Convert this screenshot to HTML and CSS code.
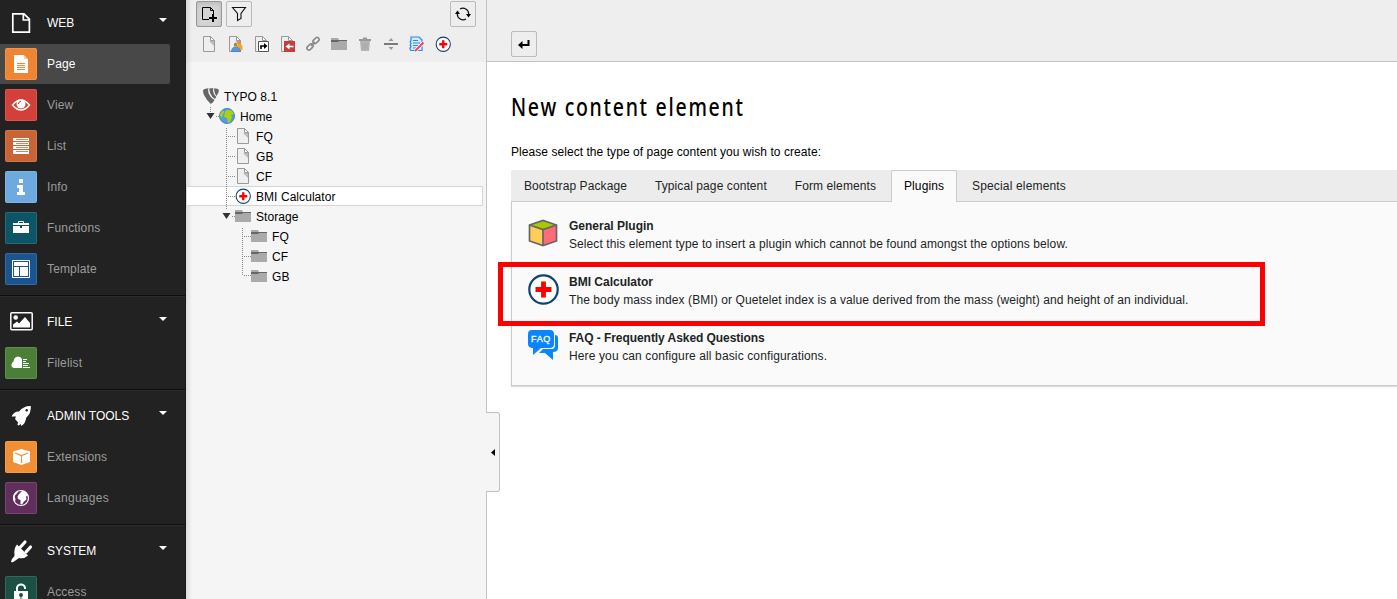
FILE: index.html
```html
<!DOCTYPE html>
<html lang="en">
<head>
<meta charset="utf-8">
<title>New content element</title>
<link rel="stylesheet" href="styles.css">
</head>
<body>
<svg width="0" height="0" class="defs">
  <defs>
    <symbol id="page" viewBox="0 0 16 16"><path d="M2.500.5h7l4 4v11h-11z" fill="#efefef" stroke="#999"/><path d="M9.500.5v4h4z" fill="#fff" stroke="#999"/><path d="M8 5h5v5z" fill="#bbb"/></symbol>
    <symbol id="folder" viewBox="0 0 16 16"><path d="M0 2h7l1 2h8v10H0z" fill="#aaa"/><path d="M0 4h16v1H8L7 6H0z" fill="#666"/></symbol>
    <symbol id="bmi" viewBox="0 0 32 32"><circle cx="16.500" cy="16.500" r="14.200" fill="#fff" stroke="#0b4472" stroke-width="2.200"/><path d="M16.500 8.500v16M8.500 16.500h16" stroke="#f00" stroke-width="4.800"/></symbol>
    <symbol id="caret" viewBox="0 0 8 4"><path d="M0 0h8L4 4z" fill="#fff"/></symbol>
  </defs>
</svg>
<div class="app">
  <nav class="modules">
    <section class="group">
      <div class="group-head"><svg class="head-icon" viewBox="0 0 24 24"><path d="M3.800 2.800H15l5.400 5.400v13H3.800zM14.300 3v6h6" fill="none" stroke="#fff" stroke-width="1.700"/></svg><span>WEB</span><svg class="caret"><use href="#caret"/></svg></div>
      <div class="module active"><svg class="tile orange" viewBox="0 0 32 32"><path d="M9 7h10v4h4v14H9z" fill="#fff"/><path d="M19 7l4 4h-4z" fill="#f9c9a0"/><path d="M12 15.500h8M12 17.500h8M12 19.500h8M12 21.500h8" stroke="#ef8532"/></svg><span>Page</span></div>
      <div class="module"><svg class="tile red" viewBox="0 0 32 32"><path d="M7.500 16Q16 5.800 24.500 16Q16 26.200 7.500 16z" fill="none" stroke="#fff" stroke-width="1.500"/><circle cx="16" cy="15" r="4.500" fill="#fff"/><path d="M13.300 15a3 3 0 0 1 2.700-2.700" fill="none" stroke="#d24039"/></svg><span>View</span></div>
      <div class="module"><svg class="tile rust" viewBox="0 0 32 32"><path d="M8 8h16v16H8z" fill="#fff"/><path d="M8 11.500h16M8 15.500h16M8 19.500h16" stroke="#ca6435"/><path d="M11 9.500h12M11 13.500h12M11 17.500h12M11 21.500h12" stroke="#ca6435" stroke-width=".8"/></svg><span>List</span></div>
      <div class="module"><svg class="tile blue" viewBox="0 0 32 32"><path d="M14 8h4v4h-4zM12 14h6v7h2v3h-8v-3h2v-4h-2z" fill="#fff"/></svg><span>Info</span></div>
      <div class="module"><svg class="tile teal" viewBox="0 0 32 32"><path d="M13.500 11V9.500h5V11" fill="none" stroke="#fff"/><path d="M8 11h16v10H8z" fill="#fff"/><path d="M8 13.500h16" stroke="#0b5566"/><path d="M15 13h2v3h-2z" fill="#0b5566"/></svg><span>Functions</span></div>
      <div class="module"><svg class="tile navy" viewBox="0 0 32 32"><path d="M7.500 7.500h17v17h-17z" fill="none" stroke="#fff"/><path d="M9 9h14v4H9zM9 14h5v9H9zM15 14h8v9h-8z" fill="#fff"/></svg><span>Template</span></div>
    </section>
    <section class="group">
      <div class="group-head"><svg class="head-icon" viewBox="0 0 24 24"><rect x="1.800" y="2.800" width="21.400" height="17" rx="1" fill="none" stroke="#fff" stroke-width="1.500"/><circle cx="6.700" cy="7.500" r="2.300" fill="#fff"/><path d="M4 17.500v-3l4-3 2 2 6-6.500 5 6v4.500z" fill="#fff"/></svg><span>FILE</span><svg class="caret"><use href="#caret"/></svg></div>
      <div class="module"><svg class="tile green" viewBox="0 0 32 32"><path d="M17 21H9q-3-1-2.500-3.500Q7 15 8.500 14.500 9 10 13 9.500q3 0 4 2.500z" fill="#fff"/><path d="M18 12.500h4M18 14.500h3M18 16.500h6M18 18.500h5M18 20.500h7" stroke="#fff"/></svg><span>Filelist</span></div>
    </section>
    <section class="group">
      <div class="group-head"><svg class="head-icon" viewBox="0 0 24 24"><path d="M21.800 2Q15 1.500 10 7.500 5.500 7 2.500 12.500L7 12.500 6 15l3.500 3.500L12 17.500V22q5-3 5-8Q22.500 9 21.800 2z" fill="#fff"/><path d="M7 16L9 18 8.500 21 9.500 21.500 12 20V17z" fill="#fff"/><circle cx="17.700" cy="6.200" r="1.200" fill="#222"/></svg><span>ADMIN TOOLS</span><svg class="caret"><use href="#caret"/></svg></div>
      <div class="module"><svg class="tile amber" viewBox="0 0 32 32"><path d="M16.500 8l8.500 2.500v10.500l-8.500 3-8.500-3V10.500z" fill="#fff"/><path d="M10 12l6.500 2.500 6.500-2.500M16.500 14.500V22" fill="none" stroke="#f18f34" stroke-width="1.200"/></svg><span>Extensions</span></div>
      <div class="module languages"><svg class="tile purple" viewBox="0 0 32 32"><circle cx="16" cy="16" r="7.500" fill="none" stroke="#fff" stroke-width="1.200"/><path d="M9 12l3-3 1 1-1.500 2-2 2 1 3-.5 3-2-4zM14 12l3-3h3l3 4.500-2 1 .5 3-2.500 2-2 3-1.500-.5V18l-2.500-1-.5-2.500z" fill="#fff"/></svg><span>Languages</span></div>
    </section>
    <section class="group">
      <div class="group-head"><svg class="head-icon" viewBox="0 0 24 24"><path d="M8 5.500l11 11q-3.500 3.500-9 2.500L5 22.500 3 23.500 2 22.500l1-2.500 2.500-3Q4.500 9.500 8 5.500z" fill="#fff"/><path d="M11.500 8L16 3M17 13L21.500 8" stroke="#fff" stroke-width="3.200" stroke-linecap="round"/></svg><span>SYSTEM</span><svg class="caret"><use href="#caret"/></svg></div>
      <div class="module"><svg class="tile pine" viewBox="0 0 32 32"><path d="M12 16v-4a4 3.500 0 0 1 8 0v1" fill="none" stroke="#fff" stroke-width="2"/><path d="M9 15h14v10H9z" fill="#fff"/><circle cx="16" cy="19" r="2" fill="#1b5045"/><path d="M15.500 19h1v4h-1z" fill="#1b5045"/></svg><span>Access</span></div>
    </section>
  </nav>

  <aside class="tree-panel">
    <div class="tree-toolbar">
      <div class="button-row">
        <button class="btn pressed"><svg viewBox="0 0 16 16"><path d="M8 13.500H1.500v-12h8l3 3V8M9.500 1.500v3h3" fill="none" stroke="#000"/><path d="M12 8v8M8 12h8" stroke="#000" stroke-width="2"/></svg></button>
        <button class="btn"><svg viewBox="0 0 16 16"><path d="M1.500 1.500h13L10 7.500v5l-3.500 2v-7z" fill="none" stroke="#111" stroke-width="1.100"/></svg></button>
        <button class="btn refresh"><svg viewBox="0 0 16 16"><path d="M5 3a5.800 5.800 0 0 1 8.700 5M11 13a5.800 5.800 0 0 1-8.700-5" fill="none" stroke="#111" stroke-width="1.200"/><path d="M11 8h5l-2.500 3.500zM0 8h5L2.500 4.500z" fill="#000"/></svg></button>
      </div>
      <div class="icon-row">
        <svg viewBox="0 0 16 16"><use href="#page"/></svg>
        <svg viewBox="0 0 16 16"><use href="#page"/><circle cx="12" cy="7" r="2" fill="#d79a2f"/><path d="M10 14V9.500q2.500-2.500 5.500 0V14z" fill="#efa82e"/><path d="M7 7.500q1.500-1.500 3 0v3H7z" fill="#b98332"/><path d="M4.500 15.500q0-4.500 4-4.500t5 4.500z" fill="#5599ee" stroke="#3972b5" stroke-width=".6"/></svg>
        <svg viewBox="0 0 16 16"><use href="#page"/><path d="M5.500 5.500h10v10h-10z" fill="#fff" stroke="#555"/><path d="M8 13v-3h4" fill="none" stroke="#000" stroke-width="1.600"/><path d="M11 7l3.500 3L11 13z"/></svg>
        <svg viewBox="0 0 16 16"><use href="#page"/><path d="M5 5h11v11H5z" fill="#c83c3c"/><path d="M14.500 10.500H9" stroke="#fff" stroke-width="1.600"/><path d="M10.500 7.500v6l-4-3z" fill="#fff"/></svg>
        <svg viewBox="0 0 16 16"><g fill="none" stroke="#888" stroke-width="1.600"><rect x="7.500" y="2.500" width="7" height="4" rx="2" transform="rotate(-45 11 4.500)"/><rect x="1.500" y="9" width="7" height="4" rx="2" transform="rotate(-45 5 11)"/><path d="M6 10l4-4"/></g></svg>
        <svg viewBox="0 0 16 16"><use href="#folder"/></svg>
        <svg viewBox="0 0 16 16"><path d="M3 5h10l-1 10H4z" fill="#b4b4b4"/><path d="M2 3h12v2H2zM6 1.500h4V3H6z" fill="#999"/><path d="M6 7v6M8 7v6M10 7v6" stroke="#a5a5a5" stroke-width=".7"/></svg>
        <svg viewBox="0 0 16 16"><path d="M1 8h14" stroke="#666" stroke-width="1.700"/><path d="M8 2l2.500 3h-5zM8 14l2.500-3h-5z" fill="#999"/></svg>
        <svg viewBox="0 0 16 16"><path d="M2 1h8l3 3v10.500H2q-2-2 0-4-1.500-1.500 0-3-1.500-1.500 0-3z" fill="#d8eaff" stroke="#218bfa" stroke-width="1.200"/><path d="M4 4.500h5M4 7h7M4 9.500h5M4 12h3" stroke="#218bfa"/><path d="M14.500 6.500L6 15" stroke="#fff" stroke-width="3.500"/><path d="M14.500 6.500L6 15" stroke="#f64751" stroke-width="2.200"/></svg>
        <svg viewBox="0 0 16 16"><use href="#bmi"/></svg>
      </div>
    </div>
    <div class="tree">
      <div class="node"><svg class="icon" viewBox="0 0 16 16"><path d="M0 2Q2 .5 5.500.3 4.500 2 5.500 5 7.500 10 11.500 11.800 9.500 15.700 7.500 15.700 3.500 12 1 7 0 4.500 0 2z" fill="#666"/><path d="M6.500.2h3.800Q9.700 2.500 10.600 5 11.600 8 13.300 8.800L12 11Q9 9.500 7.300 5.500 5.800 2 6.500.2zM11.200.2q3.800 0 4.800 1.800-.2 3-2.500 6Q12.100 6.500 11.500 4 11 1.500 11.200.2z" fill="#666"/></svg><span>TYPO 8.1</span></div>
      <div class="node"><svg class="guide g1"><path class="dots" d="M7.500 1v6M13 10.500h3"/><path d="M3.500 7h8L7.500 13z" fill="#333"/></svg><svg class="icon" viewBox="0 0 16 16"><circle cx="8" cy="8" r="7.600" fill="#4e9ae8" stroke="#4277b0" stroke-width=".8"/><path d="M6 3.500Q9 1 13 3l2 3-3 1 1 2-2 5-2 1-1-5-3-1zM1 6l3-4 1 2-2 5-1 1z" fill="#acd20a"/></svg><span>Home</span></div>
      <div class="node"><svg class="guide g2"><path class="dots" d="M23.500 2v18M25 10.500h7"/></svg><svg class="icon"><use href="#page"/></svg><span>FQ</span></div>
      <div class="node"><svg class="guide g2"><path class="dots" d="M23.500 0v20M25 10.500h7"/></svg><svg class="icon"><use href="#page"/></svg><span>GB</span></div>
      <div class="node"><svg class="guide g2"><path class="dots" d="M23.500 0v20M25 10.500h7"/></svg><svg class="icon"><use href="#page"/></svg><span>CF</span></div>
      <div class="node selected"><svg class="guide g2"><path class="dots" d="M23.500 0v20M25 10.500h7"/></svg><svg class="icon"><use href="#bmi"/></svg><span>BMI Calculator</span></div>
      <div class="node"><svg class="guide g2"><path class="dots" d="M23.500 0v4M29 10.500h3"/><path d="M19.500 7h8l-4 6z" fill="#333"/></svg><svg class="icon"><use href="#folder"/></svg><span>Storage</span></div>
      <div class="node"><svg class="guide g3"><path class="dots" d="M39.500 2v18M41 10.500h7"/></svg><svg class="icon"><use href="#folder"/></svg><span>FQ</span></div>
      <div class="node"><svg class="guide g3"><path class="dots" d="M39.500 0v20M41 10.500h7"/></svg><svg class="icon"><use href="#folder"/></svg><span>CF</span></div>
      <div class="node"><svg class="guide g3"><path class="dots" d="M39.500 0v10M41 9.500h7"/></svg><svg class="icon"><use href="#folder"/></svg><span>GB</span></div>
    </div>
  </aside>

  <main class="content">
    <div class="collapse"><svg width="4" height="7"><path d="M4 0v7L0 3.500z"/></svg></div>
    <header class="doc-header"><button class="btn"><svg viewBox="0 0 16 16"><path d="M12.500 4v5H6" fill="none" stroke="#000" stroke-width="2"/><path d="M6.500 5v8L2 9z"/></svg></button></header>
    <div class="doc-body">
      <h1>New content element</h1>
      <p class="intro">Please select the type of page content you wish to create:</p>
      <div class="tabs"><span class="tab">Bootstrap Package</span><span class="tab">Typical page content</span><span class="tab">Form elements</span><span class="tab current">Plugins</span><span class="tab">Special elements</span></div>
      <div class="panel">
        <div class="entry"><svg viewBox="0 0 32 32"><path d="M2.500 8L16 3.500 29.500 8v16L16 28.500 2.500 24z" fill="#fc5"/><path d="M16 12.500L29.500 8v16L16 28.500z" fill="#ff6b78"/><path d="M2.500 8L16 3.500 29.500 8 16 12.500z" fill="#a4cc00"/><path d="M2.500 8L16 3.500 29.500 8v16L16 28.500 2.500 24zM2.500 8L16 12.500 29.500 8M16 12.500v16" fill="none" stroke="#666" stroke-width="1.700"/></svg><div><b>General Plugin</b><p>Select this element type to insert a plugin which cannot be found amongst the options below.</p></div></div>
        <div class="entry"><svg viewBox="0 0 32 32"><use href="#bmi"/></svg><div><b>BMI Calculator</b><p>The body mass index (BMI) or Quetelet index is a value derived from the mass (weight) and height of an individual.</p></div></div>
        <div class="entry"><svg viewBox="0 0 32 32"><path d="M28 6q3 0 3 3v10q0 4-5 4v8l-8-7h-6l4-4h9q3 0 3-4z" fill="#0a84ff"/><path d="M5 1h18q4 0 4 4v10q0 4-4 4h-9l-8 7v-7Q1 19 1 15V5q0-4 4-4z" fill="#0a84ff"/><text x="14" y="13.200" text-anchor="middle" class="faq">FAQ</text></svg><div><b class="long-title">FAQ - Frequently Asked Questions</b><p class="short-text">Here you can configure all basic configurations.</p></div></div>
      </div>
    </div>
    <div class="highlight"></div>
  </main>
</div>
</body>
</html>
```

FILE: styles.css
```css
* { box-sizing: border-box; }
body { margin: 0; font: 12px/18px "Liberation Sans", Arial, sans-serif; color: #000; overflow: hidden; }
p, h1 { margin: 0; }
svg { display: block; flex: none; }
.defs { position: absolute; }
.app { display: flex; height: 599px; overflow: hidden; }

.modules { width: 186px; flex: none; background: #222; border-right: 1px solid #191919; color: #fff; }
.group { padding: 5px 0 6px; border-top: 1px solid #2d2d2d; border-bottom: 1px solid #0e0e0e; }
.group:first-child { padding-top: 3px; border-top: 0; }
.group-head { display: flex; align-items: center; height: 40px; padding: 0 18px 0 9px; }
.head-icon { width: 24px; height: 24px; margin-right: 14px; }
.group-head .caret { width: 8px; height: 4px; margin: -6px 0 0 auto; }
.module { display: flex; align-items: center; gap: 10px; height: 40px; width: 170px; margin-top: 1px; padding-left: 5px; color: #9b9b9b; letter-spacing: .15px; border-radius: 0 2px 2px 0; }
.languages { letter-spacing: .3px; }
.active { background: #484848; color: #fff; }
.tile { width: 32px; height: 32px; border-radius: 2px; box-shadow: inset 0 0 0 1px rgba(255, 255, 255, .12); }
.orange { background: #ef8532; }
.red { background: #d24039; }
.rust { background: #ca6435; }
.blue { background: #6daae0; }
.teal { background: #0b5566; }
.navy { background: #1b5591; }
.green { background: #4b7e37; }
.amber { background: #f18f34; }
.purple { background: #622e5c; }
.pine { background: #1b5045; }

.tree-panel { width: 301px; flex: none; background: linear-gradient(90deg, #dadada, #f5f5f5 6px); border-right: 1px solid #c3c3c3; }
.tree-toolbar { height: 62px; background: linear-gradient(90deg, #d6d6d6, #eee 6px); padding: 1px 10px 0; }
.button-row { display: flex; gap: 4px; }
.btn { display: flex; align-items: center; justify-content: center; width: 26px; height: 26px; padding: 0; background: #eee; border: 1px solid #bbb; border-radius: 2px; }
.btn svg { width: 16px; height: 16px; }
.pressed { background: #d4d4d4; border-color: #999; box-shadow: inset 0 2px 4px rgba(0, 0, 0, .12); }
.refresh { margin-left: auto; }
.icon-row { display: flex; gap: 10px; padding: 9px 0 0 5px; }
.icon-row svg { width: 16px; height: 16px; }
.tree { padding: 24px 3px 0 0; }
.node { display: flex; align-items: center; height: 20px; padding-left: 17px; }
.node span { margin-left: 5px; padding-top: 1px; letter-spacing: .06px; }
.icon { width: 16px; height: 16px; }
.selected { background: #fff; box-shadow: inset 0 0 0 1px #d6d6d6; }
.guide { height: 20px; }
.g1 { width: 16px; }
.g2 { width: 32px; }
.g3 { width: 48px; }
.dots { stroke: #888; stroke-dasharray: 1 1; fill: none; }

.content { flex: 1; min-width: 0; position: relative; background: #fff; }
.doc-header { height: 62px; padding: 31px 24px 0; background: #eee; border-bottom: 1px solid #c3c3c3; }
.doc-body { padding: 26px 0 0 24px; }
h1 { width: max-content; font: 500 26px/36px "Noto Sans", sans-serif; letter-spacing: 2.300px; transform: scaleX(.75); transform-origin: 0 0; }
.intro { padding: 19px 0 9px; letter-spacing: .055px; }
.tabs { display: flex; height: 32px; background: #ececec; border-bottom: 1px solid #ccc; border-radius: 2px 0 0; letter-spacing: .09px; }
.tab { height: 32px; margin-right: 2px; padding: 6px 12px; border: 1px solid transparent; border-bottom: 0; color: #212424; }
.current { background: #fafafa; border-color: #ccc; border-radius: 2px 2px 0 0; color: #000; }
.current + .tab { letter-spacing: .16px; }
.panel { height: 184px; padding: 15px; background: #fafafa; border-left: 1px solid #ccc; border-bottom: 1px solid #ccc; box-shadow: 0 1px 1px #ddd; color: #212424; }
.entry { display: flex; gap: 10px; height: 36px; margin-bottom: 20px; }
.entry svg { width: 32px; height: 32px; }
.entry p { letter-spacing: .086px; }
.entry .short-text { letter-spacing: .125px; }
.long-title { letter-spacing: -.06px; }
.faq { font: 9px "Liberation Sans", sans-serif; fill: #fff; stroke: #fff; stroke-width: .3px; letter-spacing: .7px; }
.collapse { position: absolute; left: -1px; top: 412px; width: 14px; height: 80px; display: flex; align-items: center; padding-left: 5px; background: #f5f5f5; border: 1px solid #c3c3c3; border-left: 0; border-radius: 0 3px 3px 0; }
.highlight { position: absolute; left: 11px; top: 262px; width: 767px; height: 64px; border: 5px solid #f00; }
```
